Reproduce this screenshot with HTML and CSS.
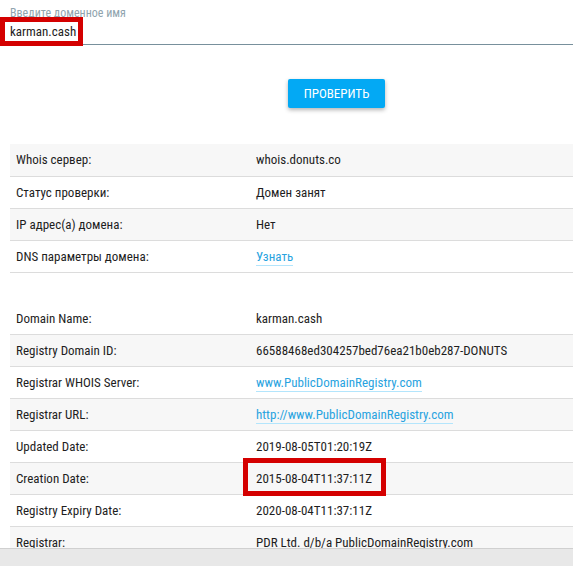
FILE: index.html
```html
<!DOCTYPE html>
<html lang="ru">
<head>
<meta charset="utf-8">
<title>Whois</title>
<link rel="stylesheet" href="styles.css">
</head>
<body>
<div class="page">
  <div class="field">
    <label class="field-label">Введите доменное имя</label>
    <div class="field-value">karman.cash</div>
    <div class="mark mark-input"></div>
  </div>
  <div class="actions">
    <button class="btn">ПРОВЕРИТЬ</button>
  </div>
  <table class="info">
    <tr><td>Whois сервер:</td><td>whois.donuts.co</td></tr>
    <tr><td>Статус проверки:</td><td>Домен занят</td></tr>
    <tr><td>IP адрес(а) домена:</td><td>Нет</td></tr>
    <tr><td>DNS параметры домена:</td><td><a class="link" href="#">Узнать</a></td></tr>
  </table>
  <table class="info info-whois">
    <tr><td>Domain Name:</td><td>karman.cash</td></tr>
    <tr><td>Registry Domain ID:</td><td>66588468ed304257bed76ea21b0eb287-DONUTS</td></tr>
    <tr><td>Registrar WHOIS Server:</td><td><a class="link" href="#">www.PublicDomainRegistry.com</a></td></tr>
    <tr><td>Registrar URL:</td><td><a class="link" href="#">http://www.PublicDomainRegistry.com</a></td></tr>
    <tr><td>Updated Date:</td><td>2019-08-05T01:20:19Z</td></tr>
    <tr><td>Creation Date:</td><td class="marked">2015-08-04T11:37:11Z<span class="mark mark-date"></span></td></tr>
    <tr><td>Registry Expiry Date:</td><td>2020-08-04T11:37:11Z</td></tr>
    <tr><td>Registrar:</td><td>PDR Ltd. d/b/a PublicDomainRegistry.com</td></tr>
  </table>
</div>
<div class="bottom-bar"></div>
</body>
</html>
```
FILE: styles.css
```css
* { box-sizing: border-box; }
html, body { margin: 0; padding: 0; background: #fff; }
body {
  font-family: "Roboto Condensed", "Liberation Sans Narrow", "DejaVu Sans Condensed", Roboto, sans-serif;
  font-size: 13px;
  color: #1e1e1e;
  overflow: hidden;
  height: 566px;
}
.page { padding-top: 5px; }
.field {
  position: relative;
  border-bottom: 1px solid #78909c;
  height: 40px;
  padding-left: 10px;
}
.field-label {
  display: block;
  font-size: 12px;
  color: #90a4ae;
  line-height: 16px;
}
.field-value {
  font-size: 13px;
  line-height: 20px;
  margin-top: 1px;
}
.mark {
  position: absolute;
  border: 5px solid #d40000;
}
.mark-input { left: 0; top: 12px; width: 83px; height: 29px; }
.actions {
  padding-left: 288px;
  padding-top: 34px;
  height: 99px;
}
.btn {
  width: 97px;
  height: 29px;
  border: 0;
  border-radius: 2px;
  background: #03a9f4;
  color: #fff;
  font-family: inherit;
  font-size: 13px;
  box-shadow: 0 2px 4px rgba(0,0,0,0.3);
  padding: 0;
}
.info {
  border-collapse: collapse;
  margin-left: 10px;
  width: 563px;
}
.info td {
  height: 32px;
  padding: 0 6px;
  border-bottom: 1px solid #dcdcdc;
  vertical-align: middle;
}
.info td:first-child { width: 240px; }
.info tr:nth-child(odd) td { background: #f7f7f7; }
.info-whois { margin-top: 30px; }
.info-whois tr:nth-child(odd) td { background: #fff; }
.info-whois tr:nth-child(even) td { background: #f7f7f7; }
.link {
  color: #29a3e0;
  text-decoration: none;
  border-bottom: 1px solid #b3e5fc;
  padding-bottom: 1px;
}
.marked { position: relative; }
.mark-date { left: -7px; top: -5px; width: 143px; height: 38px; }
.bottom-bar {
  position: fixed;
  left: 0; right: 0; bottom: 0;
  height: 18px;
  background: #e8e8e8;
  border-top: 1px solid #d0d0d0;
}
```
